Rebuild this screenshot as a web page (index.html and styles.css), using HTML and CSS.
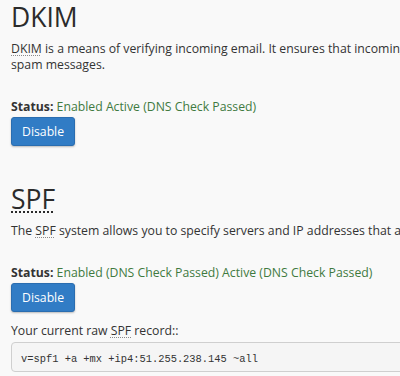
FILE: index.html
```html
<!DOCTYPE html>
<html>
<head>
<meta charset="utf-8">
<link rel="stylesheet" href="styles.css">
</head>
<body>
<div class="page">
  <section class="section">
    <h1 class="title">DKIM</h1>
    <p class="desc"><abbr class="abbr" title="DomainKeys Identified Mail">DKIM</abbr> is a means of verifying incoming email. It ensures that incoming messages are unmodified and from the sender they claim to be from. This feature works to prevent<br>spam messages.</p>
    <div class="status"><span class="label">Status:</span> <span class="ok">Enabled Active (DNS Check Passed)</span></div>
    <button class="btn">Disable</button>
  </section>
  <section class="section spf">
    <h1 class="title"><abbr class="abbr big" title="Sender Policy Framework">SPF</abbr></h1>
    <p class="desc">The <abbr class="abbr" title="Sender Policy Framework">SPF</abbr> system allows you to specify servers and IP addresses that are authorized to send mail from your domain.</p>
    <div class="status"><span class="label">Status:</span> <span class="ok">Enabled (DNS Check Passed) Active (DNS Check Passed)</span></div>
    <button class="btn">Disable</button>
    <div class="raw">Your current raw <abbr class="abbr" title="Sender Policy Framework">SPF</abbr> record::</div>
    <pre class="record">v=spf1 +a +mx +ip4:51.255.238.145 ~all</pre>
  </section>
</div>
</body>
</html>
```
FILE: styles.css
```css
html, body {
  margin: 0;
  padding: 0;
  background: #f9f9f9;
}
body {
  font-family: "Open Sans", "Liberation Sans", sans-serif;
  font-size: 12.25px;
  color: #333;
  overflow: hidden;
  height: 376px;
}
.page {
  padding: 2px 0 0 11px;
  width: 1100px;
}
.title {
  font-size: 26.5px;
  font-weight: 400;
  line-height: 30px;
  margin: 0 0 9px;
  color: #2b2b2b;
}
.desc {
  margin: 0;
  line-height: 16px;
}
.abbr {
  text-decoration: underline dotted #8a8a8a;
  text-decoration-thickness: 1px;
  text-underline-offset: 2px;
  cursor: help;
}
.abbr.big {
  text-decoration: underline dotted #2b2b2b;
  text-decoration-thickness: 2px;
  text-underline-offset: 2px;
}
.status {
  margin-top: 26px;
  line-height: 16px;
}
.label {
  font-weight: 700;
}
.ok {
  color: #3f7a3f;
}
.btn {
  display: block;
  margin-top: 2px;
  font-family: "Open Sans", "Liberation Sans", sans-serif;
  font-size: 12.25px;
  color: #fff;
  background: #317cc5;
  border: 1px solid #2a6db0;
  border-radius: 3px;
  padding: 0 10px;
  height: 29px;
  width: 64px;
  box-shadow: 0 1px 2px rgba(0,0,0,.25);
}
.spf {
  margin-top: 38px;
}
.raw {
  margin-top: 11px;
  line-height: 16px;
}
.record {
  margin: 3px 0 0;
  padding: 9px 9px 5px;
  background: #f5f5f5;
  border: 1px solid #cfcfcf;
  border-radius: 4px;
  font-family: "Liberation Mono", "DejaVu Sans Mono", monospace;
  font-size: 10.4px;
  line-height: 14px;
  color: #333;
}
```
